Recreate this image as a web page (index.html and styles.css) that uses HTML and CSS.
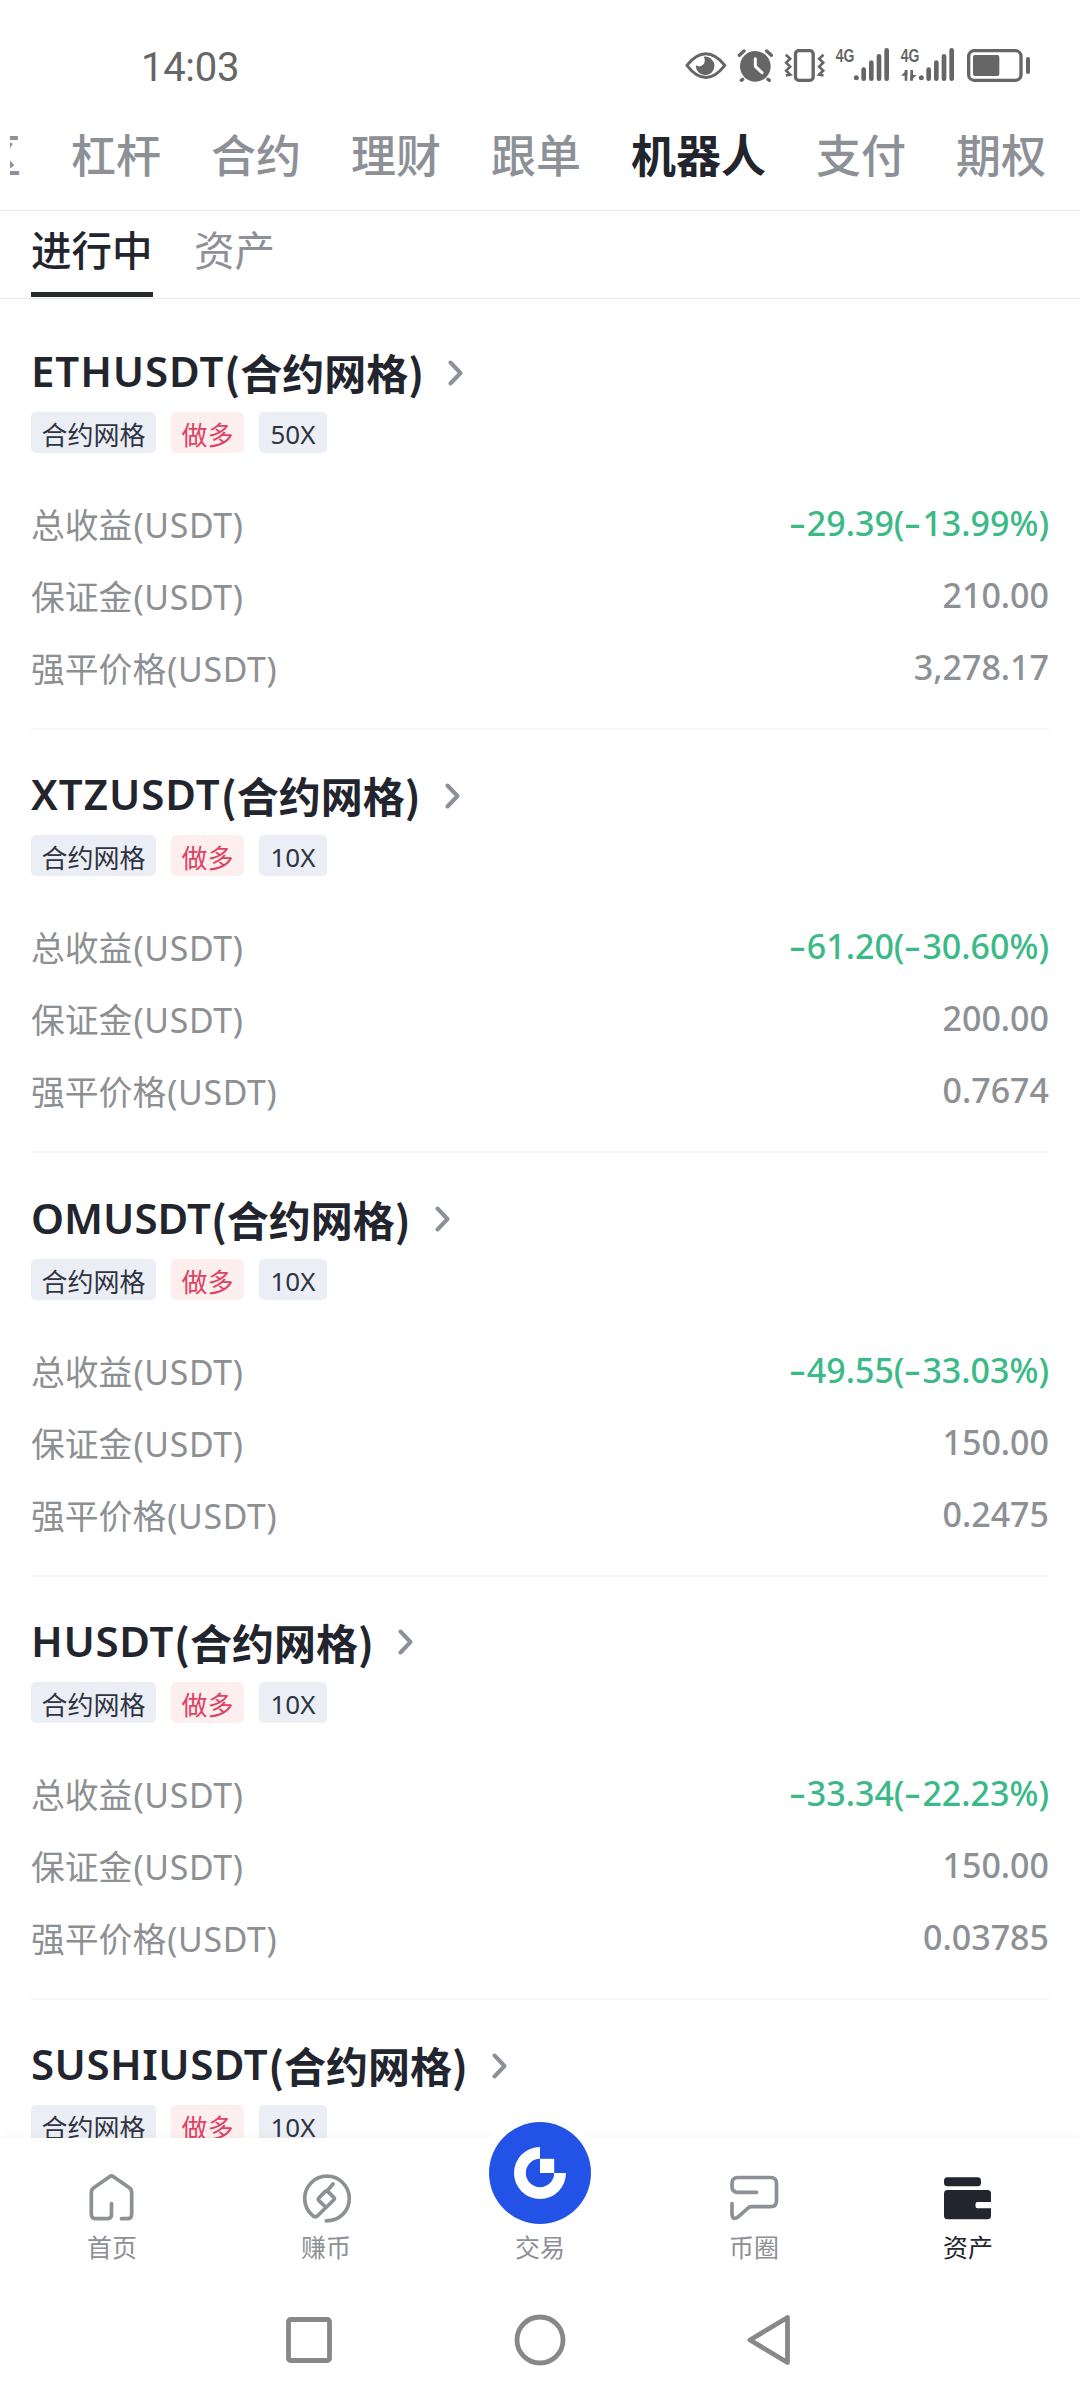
FILE: index.html
```html
<!DOCTYPE html>
<html lang="zh-CN">
<head>
<meta charset="utf-8">
<title>资产</title>
<link rel="stylesheet" href="styles.css">
</head>
<body>
<div class="screen">
  <div class="status">
    <span class="time">14:03</span>
    <div class="status-icons">
      <svg class="eye" viewBox="72 45 128 120" width="43" height="40"><path d="M80 106Q137 37 194 106Q137 179 80 106Z" fill="none" stroke="#666" stroke-width="9" stroke-linejoin="round"/><path d="M131 80a28 28 0 1 1-24 26q14 8 23-3q7-10 1-23Z" fill="#666"/></svg>
      <svg class="alarm" viewBox="228 45 117 120" width="39" height="40"><circle cx="286" cy="109" r="46" fill="#666"/><path d="M238 76l14-13M334 76l-14-13M248 148l-4 3M324 148l4 3" stroke="#666" stroke-width="10" stroke-linecap="round"/><path d="M286 86v23l20 19" fill="none" stroke="#fff" stroke-width="9" stroke-linecap="round" stroke-linejoin="round"/></svg>
      <svg class="vibrate" viewBox="370 45 128 120" width="43" height="40"><rect x="407" y="62" width="53" height="89" rx="10" fill="none" stroke="#666" stroke-width="10"/><path d="M378 74l13 12-12 12 12 12-12 12 12 12-13 2M491 74l-13 12 12 12-12 12 12 12-12 12 13 2" fill="none" stroke="#666" stroke-width="8"/></svg>
      <svg class="signal" viewBox="525 45 165 120" width="55" height="40"><text x="527" y="97" class="net" textLength="56" lengthAdjust="spacingAndGlyphs">4G</text><circle cx="589" cy="143" r="7.500" fill="#666"/><path d="M611 119v27M634 98v48M657 79v67M680 61v85" stroke="#666" stroke-width="14" stroke-linecap="round"/></svg>
      <svg class="signal" viewBox="720 45 165 120" width="55" height="40"><text x="722" y="97" class="net" textLength="56" lengthAdjust="spacingAndGlyphs">4G</text><path d="M738 152v-32M755 120v32" fill="none" stroke="#666" stroke-width="8"/><path d="M742 119v18h-19ZM751 153v-18h19Z" fill="#666"/><circle cx="784" cy="143" r="7.500" fill="#666"/><path d="M806 119v27M829 98v48M852 79v67M875 61v85" stroke="#666" stroke-width="14" stroke-linecap="round"/></svg>
      <svg class="battery" viewBox="918 45 195 120" width="65" height="40"><rect x="926" y="62" width="157" height="89" rx="17" fill="none" stroke="#666" stroke-width="10"/><rect x="939" y="75" width="79" height="63" rx="6" fill="#666"/><path d="M1104 87v39" stroke="#666" stroke-width="12" stroke-linecap="round"/></svg>
    </div>
  </div>

  <nav class="tabs">
    <div class="strip">
      <span class="tab">专区</span><span class="tab">杠杆</span><span class="tab">合约</span><span class="tab">理财</span><span class="tab">跟单</span><span class="tab active">机器人</span><span class="tab">支付</span><span class="tab">期权</span>
    </div>
  </nav>

  <nav class="subtabs">
    <span class="subtab active">进行中</span>
    <span class="subtab">资产</span>
  </nav>

  <main class="list">
    <section class="card">
      <h2 class="title"><span class="pair eth">ETHUSDT</span><span class="kind">(合约网格)</span><svg class="chev" viewBox="0 0 16 26"><path d="M2.500 2.500L12.500 13L2.500 23.500"/></svg></h2>
      <div class="tags"><span class="tag grid">合约网格</span><span class="tag long">做多</span><span class="tag lever">50X</span></div>
      <dl class="rows">
        <div class="row"><dt>总收益<span class="unit">(USDT)</span></dt><dd class="gain"><i>-</i>29.39(<i>-</i>13.99%)</dd></div>
        <div class="row"><dt>保证金<span class="unit">(USDT)</span></dt><dd>210.00</dd></div>
        <div class="row"><dt>强平价格<span class="unit">(USDT)</span></dt><dd>3,278.17</dd></div>
      </dl>
    </section>
    <section class="card">
      <h2 class="title"><span class="pair xtz">XTZUSDT</span><span class="kind">(合约网格)</span><svg class="chev" viewBox="0 0 16 26"><path d="M2.500 2.500L12.500 13L2.500 23.500"/></svg></h2>
      <div class="tags"><span class="tag grid">合约网格</span><span class="tag long">做多</span><span class="tag lever">10X</span></div>
      <dl class="rows">
        <div class="row"><dt>总收益<span class="unit">(USDT)</span></dt><dd class="gain"><i>-</i>61.20(<i>-</i>30.60%)</dd></div>
        <div class="row"><dt>保证金<span class="unit">(USDT)</span></dt><dd>200.00</dd></div>
        <div class="row"><dt>强平价格<span class="unit">(USDT)</span></dt><dd>0.7674</dd></div>
      </dl>
    </section>
    <section class="card">
      <h2 class="title"><span class="pair om">OMUSDT</span><span class="kind">(合约网格)</span><svg class="chev" viewBox="0 0 16 26"><path d="M2.500 2.500L12.500 13L2.500 23.500"/></svg></h2>
      <div class="tags"><span class="tag grid">合约网格</span><span class="tag long">做多</span><span class="tag lever">10X</span></div>
      <dl class="rows">
        <div class="row"><dt>总收益<span class="unit">(USDT)</span></dt><dd class="gain"><i>-</i>49.55(<i>-</i>33.03%)</dd></div>
        <div class="row"><dt>保证金<span class="unit">(USDT)</span></dt><dd>150.00</dd></div>
        <div class="row"><dt>强平价格<span class="unit">(USDT)</span></dt><dd>0.2475</dd></div>
      </dl>
    </section>
    <section class="card">
      <h2 class="title"><span class="pair h">HUSDT</span><span class="kind">(合约网格)</span><svg class="chev" viewBox="0 0 16 26"><path d="M2.500 2.500L12.500 13L2.500 23.500"/></svg></h2>
      <div class="tags"><span class="tag grid">合约网格</span><span class="tag long">做多</span><span class="tag lever">10X</span></div>
      <dl class="rows">
        <div class="row"><dt>总收益<span class="unit">(USDT)</span></dt><dd class="gain"><i>-</i>33.34(<i>-</i>22.23%)</dd></div>
        <div class="row"><dt>保证金<span class="unit">(USDT)</span></dt><dd>150.00</dd></div>
        <div class="row"><dt>强平价格<span class="unit">(USDT)</span></dt><dd>0.03785</dd></div>
      </dl>
    </section>
    <section class="card">
      <h2 class="title"><span class="pair sushi">SUSHIUSDT</span><span class="kind">(合约网格)</span><svg class="chev" viewBox="0 0 16 26"><path d="M2.500 2.500L12.500 13L2.500 23.500"/></svg></h2>
      <div class="tags"><span class="tag grid">合约网格</span><span class="tag long">做多</span><span class="tag lever">10X</span></div>
    </section>
  </main>

  <footer class="nav">
    <a class="item"><svg viewBox="0 0 54 54"><path d="M36.500 48.700H42Q46.700 48.700 46.700 44V22.500Q46.700 19.500 44.400 17.700L28.500 6.800Q26.500 5.200 24.500 6.800L8.800 17.700Q6.300 19.500 6.300 22.500V44Q6.300 48.700 11 48.700H22Q26.500 48.700 26.500 44.200V33.500"/></svg><span>首页</span></a>
    <a class="item"><svg viewBox="0 0 54 54"><path d="M27.300 50.800C40.500 50.800 50.300 41 50.300 28.500A22.300 22.300 0 0 0 5.700 28.500C5.700 36 9.500 42 13.700 45.700Q16.300 48 18.800 45.500L34.700 30Q36 28.700 34.700 27.400L29 21.600Q27.500 20.200 26 21.600L20 27.800Q18.700 29.200 20 30.600L26.500 37M28 21L34 14"/></svg><span>赚币</span></a>
    <a class="item trade"><span class="disc"><svg viewBox="0 0 102 102"><path d="M51 25A26 26 0 1 0 77 51H65.200A14.200 14.200 0 1 1 51 36.800Z" fill="#fff"/><path d="M51 36.800H65.200V51H51Z" fill="#fff"/></svg></span><span>交易</span></a>
    <a class="item"><svg viewBox="0 0 54 54"><path d="M29.500 22.300H11Q5 22.300 5 16.500V13.500Q5 7.500 11 7.500H43.500Q49.500 7.500 49.500 13.500V30.700Q49.500 36.700 43.500 36.700H24.500Q22.500 36.700 21 38L11.300 46.800Q5.500 51 5 44V33.500"/></svg><span>币圈</span></a>
    <a class="item on"><svg viewBox="0 0 54 54"><rect class="fill" x="3" y="7.300" width="37" height="9" rx="3.500"/><path class="fill" d="M6.500 20H46.500Q50 20 50 23.500V32H36.500q-2 0-2 2V36.300q0 2 2 2H50V45.800Q50 49.300 46.500 49.300H6.500Q3 49.300 3 45.800V23.500Q3 20 6.500 20Z"/></svg><span>资产</span></a>
  </footer>

  <div class="system">
    <svg viewBox="0 0 54 54"><rect x="6.500" y="6.500" width="41" height="41" rx="2"/></svg>
    <svg viewBox="0 0 54 54"><circle cx="27" cy="27" r="23"/></svg>
    <svg viewBox="0 0 54 54"><path d="M43.500 4.500V49.500L6 27Z"/></svg>
  </div>
</div>
</body>
</html>
```
FILE: styles.css
```css
* { box-sizing: border-box; }
body {
  margin: 0;
  background: #fff;
  color: #22252d;
  font-family: "Noto Sans CJK SC", "Noto Sans", sans-serif;
}
.screen {
  width: 1080px;
  height: 2400px;
  overflow: hidden;
  display: flex;
  flex-direction: column;
}
h2, dl, dt, dd { margin: 0; font-weight: 400; }

.status {
  height: 100px;
  flex: none;
  display: flex;
  justify-content: space-between;
  align-items: flex-start;
  padding: 45px 49px 0 141px;
}
.time {
  font: 400 40px/46px Roboto, sans-serif;
  color: #666;
  letter-spacing: -.3px;
}
.status-icons { display: flex; }
.status-icons svg { display: block; flex: none; }
.alarm { margin-left: 9px; }
.vibrate { margin-left: 8px; }
.signal { margin-left: 9px; }
.signal + .signal { margin-left: 10px; }
.battery { margin-left: 11px; }
.net { font: 700 57px "Liberation Sans", sans-serif; fill: #666; }

.tabs {
  height: 111px;
  flex: none;
  border-bottom: 1px solid #ebebeb;
}
.strip {
  margin-left: 10px;
  display: flex;
  gap: 50px;
  overflow: hidden;
  white-space: nowrap;
  font-size: 45px;
  line-height: 108px;
  color: #8d9197;
}
.tab { flex: none; font-weight: 500; }
.tab:first-child { margin-left: -79px; }
.tab.active { font-weight: 700; color: #22252d; }

.subtabs {
  height: 88px;
  flex: none;
  display: flex;
  gap: 41px;
  padding: 0 31px;
  border-bottom: 1px solid #e9e9e9;
  font-size: 40.500px;
  line-height: 76px;
  color: #8d9197;
}
.subtab { height: 86px; }
.subtab.active {
  width: 122px;
  font-weight: 500;
  color: #22252d;
  border-bottom: 5px solid #262a2d;
}

.list {
  height: 1839px;
  flex: none;
  overflow: hidden;
  padding: 46px 31px 0;
}
.card { border-bottom: 2px solid #f6f6f6; padding-bottom: 25px; }
.card + .card { margin-top: 38.300px; }
.title {
  display: flex;
  height: 60px;
  align-items: center;
  line-height: 54px;
  padding-bottom: 6px;
}
.pair { font: 600 42px/52px "Noto Sans", sans-serif; padding-bottom: 2px; }
.eth { letter-spacing: .9px; }
.xtz { letter-spacing: 1px; }
.om { letter-spacing: 0; }
.h { letter-spacing: .7px; }
.sushi { letter-spacing: .5px; }
.kind { font-weight: 700; font-size: 42px; }
.chev { width: 16px; height: 26px; margin: 1px 0 0 24px; }
.chev path { fill: none; stroke: #8d9197; stroke-width: 4; stroke-linecap: round; stroke-linejoin: round; }

.tags { display: flex; gap: 15px; margin-top: 7px; height: 40px; }
.tag {
  height: 41px;
  border-radius: 5px;
  background: #eceef6;
  color: #2f3441;
  font-size: 26px;
  line-height: 43px;
  text-align: center;
}
.grid { width: 125px; }
.long { width: 73px; background: #feefef; color: #dd4263; }
.lever { width: 68px; font-family: "Noto Sans", sans-serif; line-height: 44px; }

.rows { margin-top: 37px; height: 214px; display: grid; grid-template-rows: repeat(3, 1fr); }
.row {
  display: flex;
  justify-content: space-between;
  align-items: center;
  color: #8d9092;
  font-size: 33.800px;
  line-height: 69px;
}
dt { padding-bottom: 1px; }
.unit { font-family: "Noto Sans", sans-serif; letter-spacing: .7px; margin-left: 1px; }
dd { font: 500 34px/66px "Noto Sans", sans-serif; color: #8d9094; padding-bottom: 4px; }
dd i {
  display: inline-block;
  font-style: normal;
  margin-right: 7px;
  transform: scaleX(1.550);
  transform-origin: 0 50%;
}
.gain { color: #3bb986; }

.nav {
  height: 159px;
  flex: none;
  display: flex;
  padding: 0 5px;
  box-shadow: 0 -4px 8px rgba(30, 40, 60, .025);
}
.item {
  flex: 1;
  display: flex;
  flex-direction: column;
  align-items: center;
  padding-top: 32px;
  font-size: 25px;
  line-height: 36px;
  color: #8d9094;
}
.item > svg { width: 54px; height: 54px; margin-bottom: 4px; fill: none; stroke: #8d9094; stroke-width: 3.700; stroke-linecap: round; stroke-linejoin: round; }
.item .fill { fill: #22252d; stroke: none; }
.on { color: #22252d; }
.trade { padding-top: 0; }
.disc {
  width: 102px;
  height: 102px;
  margin-top: -16px;
  margin-bottom: 4px;
  border-radius: 50%;
  background: #2352e7;
  box-shadow: 0 0 0 10px #fff;
}
.disc svg { display: block; width: 102px; height: 102px; }

.system {
  flex: 1;
  display: flex;
  gap: 177px;
  padding: 16px 0 0 282px;
}
.system svg { width: 54px; height: 54px; flex: none; fill: none; stroke: #888; stroke-width: 4.800; stroke-linejoin: round; }
```
